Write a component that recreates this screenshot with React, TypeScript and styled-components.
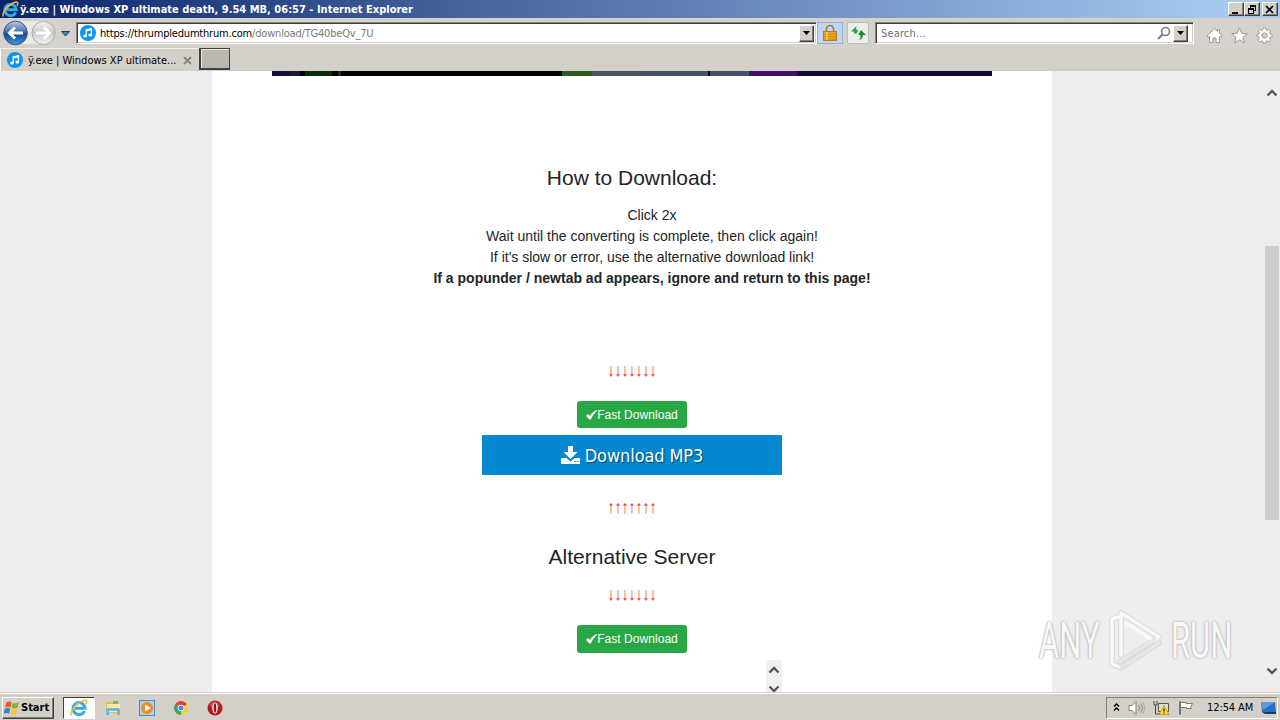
import styled, { createGlobalStyle } from "styled-components";

const uiFont = `Tahoma, "DejaVu Sans Condensed", "DejaVu Sans", sans-serif`;

const App = () => {
  return (
    <Desktop>
      <GlobalStyle />
      <TitleBar>
        <IeLogo size={17} />
        <TitleText>ÿ.exe | Windows XP ultimate death, 9.54 MB, 06:57 - Internet Explorer</TitleText>
        <WindowButtons>
          <WinButton>
            <svg width="10" height="9"><path d="M1 7h6v2H1z" /></svg>
          </WinButton>
          <WinButton>
            <svg width="10" height="9"><path d="M3 0h6v6H7V5h1V2H4v1H3zM1 3h6v6H1zM2 5v3h4V5z" fillRule="evenodd" /></svg>
          </WinButton>
          <WinButton $gap>
            <svg width="10" height="9"><path d="M1 1l7 7M8 1L1 8" stroke="#000" strokeWidth="1.7" /></svg>
          </WinButton>
        </WindowButtons>
      </TitleBar>

      <NavBar>
        <NavButtons />
        <AddressBox>
          <MusicIcon size={16} />
          <Url><i>https://</i><b>thrumpledumthrum.com</b>/download/TG40beQv_7U</Url>
          <DropButton><Triangle /></DropButton>
        </AddressBox>
        <SquareButton $blue>
          <svg width="16" height="18" viewBox="0 0 16 18">
            <path d="M4.500 8V5a3.500 3.500 0 0 1 7 0v3" fill="none" stroke="#a8842a" strokeWidth="1.700" />
            <rect x="1.500" y="7.500" width="13" height="9" fill="#e9a820" stroke="#b97c13" />
            <path d="M2 10h12M2 12.500h12M2 15h12" stroke="#c98a1b" />
            <path d="M5 8v8" stroke="#ffd977" strokeWidth="2" opacity=".6" />
          </svg>
        </SquareButton>
        <SquareButton>
          <svg width="16" height="16" viewBox="0 0 16 16">
            <path d="M6.500 1L1 6.500h3v2h3v-2h2L6 4z" fill="#2f9e3d" />
            <path d="M11 5l5 5h-3q0 4-4 5 2-2 1.500-5H8z" fill="#238431" />
          </svg>
        </SquareButton>
        <SearchBox>
          <span>Search...</span>
          <svg width="14" height="14" viewBox="0 0 14 14" fill="none" stroke="#858585">
            <circle cx="8.500" cy="5.500" r="4" strokeWidth="1.7" />
            <path d="M5.500 8.500L1 13" strokeWidth="2.300" />
          </svg>
          <DropButton><Triangle /></DropButton>
        </SearchBox>
        <Tools>
          <svg width="17" height="17" viewBox="0 0 17 17">
            <path d="M8.500 1.500L1 9l1.500 1L3.500 9.500V15.500H7V11h3v4.500h3.500V9.500l1 .5L16 9l-2.500-2.500V2.500h-2V4.500z" />
          </svg>
          <svg width="17" height="17" viewBox="0 0 17 17">
            <path d="M8.500 1l2.100 5.300 5.700.4-4.400 3.600 1.500 5.600-4.900-3.100-4.900 3.100 1.500-5.600L.7 6.700l5.700-.4z" />
          </svg>
          <svg width="17" height="17" viewBox="0 0 17 17">
            <path d="M7.200 1h2.600l.4 2 1.200.5 1.700-1.200 1.700 1.700-1.200 1.700.5 1.300 2 .4v2.400l-2 .4-.5 1.300 1.200 1.700-1.700 1.700-1.700-1.200-1.200.5-.4 2H7.200l-.4-2-1.200-.5-1.700 1.200-1.700-1.700 1.200-1.700-.5-1.300-2-.4V7.400l2-.4.5-1.300L2.200 4l1.700-1.700 1.700 1.200L6.800 3z" />
            <circle cx="8.500" cy="8.500" r="2.600" fill="#d6d1cb" />
          </svg>
        </Tools>
      </NavBar>

      <TabBar>
        <Tab>
          <MusicIcon size={16} />
          <span>ÿ.exe | Windows XP ultimate...</span>
          <svg width="9" height="9"><path d="M1 1l7 7M8 1L1 8" stroke="#8a8680" strokeWidth="2" /></svg>
        </Tab>
        <NewTab />
      </TabBar>

      <Viewport>
        <Page>
          <Banner />
          <Heading $top={87}>How to Download:</Heading>
          <Steps>
            <li>Click 2x</li>
            <li>Wait until the converting is complete, then click again!</li>
            <li>If it's slow or error, use the alternative download link!</li>
            <li><strong>If a popunder / newtab ad appears, ignore and return to this page!</strong></li>
          </Steps>
          <Arrows $top={71}>↓↓↓↓↓↓↓</Arrows>
          <FastButton $height={27}><Check />Fast Download</FastButton>
          <Mp3Button>
            <svg width="19" height="18" viewBox="0 0 19 18" fill="#fff">
              <path d="M7 0h5v6h4.500L9.500 13 2.500 6H7z" />
              <path d="M0 12h5.500l4 3.500 4-3.500H19v6H0z" />
              <path d="M13 15.500h1.500M16 15.500h1.500" stroke="#0288d1" />
            </svg>
            <span>Download MP3</span>
          </Mp3Button>
          <Arrows $top={22}>↑↑↑↑↑↑↑</Arrows>
          <Heading $top={24}>Alternative Server</Heading>
          <Arrows $top={12}>↓↓↓↓↓↓↓</Arrows>
          <FastButton $height={28}><Check />Fast Download</FastButton>
          <Frame>
            <FrameScroll>
              <Chevron up />
              <Chevron />
            </FrameScroll>
          </Frame>
        </Page>
        <ScrollBar>
          <Chevron up />
          <Thumb />
          <Chevron />
        </ScrollBar>
        <Watermark>
          <Mark $width={62}><span>ANY</span></Mark>
          <svg width="60" height="66" viewBox="0 0 60 66" fill="none" strokeLinejoin="round" strokeLinecap="round">
            <g stroke="#c9c9c9" strokeWidth="5.500" opacity=".6">
              <path d="M12 9L6 11v45l7 3M15 47V5l38 24-38 24M53 35L15 60v-5" />
            </g>
            <g stroke="#f8f8f8" strokeWidth="3.500">
              <path d="M12 9L6 11v45l7 3M15 47V5l38 24-5 4-28-18" />
            </g>
            <path d="M13 54L48 32l5 3-38 25v-3" stroke="#e6e6e6" strokeWidth="3.500" />
          </svg>
          <Mark $width={64}><span>RUN</span></Mark>
        </Watermark>
      </Viewport>

      <TaskBar>
        <StartButton>
          <svg width="16" height="16" viewBox="0 0 16 16">
            <path d="M2.500 2.500Q5 .8 7.800 2.300L6.500 7.500Q4 6.300 1 7.800z" fill="#ee5c26" />
            <path d="M8.800 2.700Q11.500 4 14.800 2.300L13.500 7.800Q10.500 9 7.500 7.800z" fill="#7db72f" />
            <path d="M.8 8.800Q3.500 7.300 6.300 8.500L5 13.500Q2.500 12.500-.4 14z" fill="#2c83d2" />
            <path d="M7.300 8.800Q10.300 10 13.300 8.800L12 14Q9 15.200 6 13.800z" fill="#fbc42c" />
          </svg>
          Start
        </StartButton>
        <TaskItem $active><IeLogo size={18} /></TaskItem>
        <TaskItem>
          <svg width="16" height="16" viewBox="0 0 16 16">
            <path d="M1 2h5l1 1h7v10H1z" fill="#e7bd55" />
            <path d="M2 4h13v8H2z" fill="#fbe8a2" />
            <path d="M8 1h5v3H8z" fill="#75b965" />
            <path d="M1 15V10q0-2 2-2h10q2 0 2 2v5h-3v-4H4v4z" fill="#6bb7dd" />
          </svg>
        </TaskItem>
        <TaskItem>
          <svg width="16" height="16" viewBox="0 0 16 16">
            <rect x=".5" y=".5" width="15" height="15" fill="#acd1ef" stroke="#4c8fc7" />
            <circle cx="8" cy="8" r="6" fill="#f28a1c" />
            <path d="M6 4.500v7L12 8z" fill="#fff" />
          </svg>
        </TaskItem>
        <TaskItem>
          <svg width="14" height="14" viewBox="0 0 14 14">
            <path d="M7 7L1 3.500A7 7 0 0 1 13 3.500z" fill="#df4534" />
            <path d="M7 7V14A7 7 0 0 1 1 3.500z" fill="#3ba55b" />
            <path d="M7 7l6-3.500A7 7 0 0 1 7 14z" fill="#f9ce3c" />
            <circle cx="7" cy="7" r="3.300" fill="#fff" />
            <circle cx="7" cy="7" r="2.500" fill="#4588e8" />
          </svg>
        </TaskItem>
        <TaskItem>
          <svg width="16" height="16" viewBox="0 0 16 16">
            <circle cx="8" cy="8" r="7.500" fill="#b51a1f" />
            <ellipse cx="7.500" cy="5" rx="5" ry="3.500" fill="#da6464" opacity=".6" />
            <ellipse cx="8" cy="8" rx="2.700" ry="5.500" fill="#fff" />
            <ellipse cx="8" cy="8" rx="1.300" ry="4.700" fill="#901318" />
          </svg>
        </TaskItem>
        <Tray>
          <svg width="7" height="9" fill="none" stroke="#000" strokeWidth="1.400"><path d="M1 3.500L3.500 1 6 3.500M1 7.500L3.500 5 6 7.500" /></svg>
          <svg width="17" height="16" viewBox="0 0 17 16" fill="none" stroke="#85827d">
            <path d="M1 5.500h3l4-4v13l-4-4H1z" fill="#fff" />
            <path d="M10.500 5q2 3 0 6M12.500 3.500q3.500 4.500 0 9" /><path d="M14.500 2q4 6 0 12" stroke="#aaa" />
          </svg>
          <svg width="17" height="16" viewBox="0 0 17 16">
            <path d="M5.500 3.500h10v8h-10z" fill="#ddd" stroke="#555" />
            <path d="M1 1v4h3V1M2.500 5v9h6" fill="none" stroke="#444" />
            <path d="M11 5.500l5 9H6z" fill="#ffdc22" stroke="#ba8e00" strokeWidth=".7" />
            <path d="M11 8.500v3M11 12.500v1" stroke="#222" strokeWidth="1.300" />
          </svg>
          <svg width="17" height="16" viewBox="0 0 17 16" fill="#fff" stroke="#77746f">
            <path d="M2.500 2.500h6v1h6l-2 4 1 1h-5v-1h-6z" />
            <path d="M1.500 1.500h1v13h-1z" />
          </svg>
          <Clock>12:54 AM</Clock>
          <svg width="15" height="14" viewBox="0 0 15 14">
            <path d="M0 1h14l1 10H1z" fill="#2870bd" />
            <path d="M0 1h14L2 9z" fill="#5a9bdd" />
            <path d="M1 11h14v2H4z" fill="#183d6d" />
          </svg>
        </Tray>
      </TaskBar>
    </Desktop>
  );
};

const IeLogo = ({ size }: { size: number }) => (
  <svg width={size} height={size} viewBox="0 0 18 18" fill="none">
    <path d="M14.500 12A6 6 0 1 1 15 9.300H5" stroke="#36a9e8" strokeWidth="3" />
    <path d="M4 8.500q1-4 5-4.300" stroke="#9ce1fa" strokeWidth="1" />
    <path d="M1.500 16.500Q-.5 14 5 7.800 12 .3 16 1.300q1.500.5 0 4" stroke="#efbd31" strokeWidth="1.600" />
  </svg>
);

const MusicIcon = ({ size }: { size: number }) => (
  <svg width={size} height={size} viewBox="0 0 16 16">
    <circle cx="8" cy="8" r="8" fill="#0b94f4" />
    <path d="M6.200 11V4.700l5.300-1v6.300" fill="none" stroke="#fff" strokeWidth="1.300" />
    <path d="M6.200 5.500l5.300-1" stroke="#fff" strokeWidth="1.800" />
    <ellipse cx="5" cy="11" rx="1.900" ry="1.600" fill="#fff" />
    <ellipse cx="10.300" cy="10" rx="1.900" ry="1.600" fill="#fff" />
  </svg>
);

const NavButtons = () => (
  <svg width="75" height="30" viewBox="0 0 75 30">
    <defs>
      <linearGradient id="back" x2="0" y2="1">
        <stop stopColor="#b7c9e6" />
        <stop offset=".45" stopColor="#416fb1" />
        <stop offset=".55" stopColor="#154a94" />
        <stop offset="1" stopColor="#3a9be0" />
      </linearGradient>
      <linearGradient id="forward" x2="0" y2="1">
        <stop stopColor="#f6f6f6" />
        <stop offset=".5" stopColor="#c8cacb" />
        <stop offset="1" stopColor="#f2f5f7" />
      </linearGradient>
    </defs>
    <path d="M15 3h29v23H15z" fill="#ece9e5" />
    <circle cx="15.500" cy="15" r="11.800" fill="url(#back)" stroke="#375785" />
    <circle cx="43.500" cy="15" r="11.500" fill="url(#forward)" stroke="#a8abad" />
    <path d="M23 15H10M15 9.500L9.500 15l5.500 5.500" fill="none" stroke="#fff" strokeWidth="3" />
    <path d="M36 15h13M44 9.500l5.500 5.500-5.500 5.500" fill="none" stroke="#fff" strokeWidth="3" />
    <path d="M61.500 13.500h8L65.500 18z" fill="#3189bd" stroke="#203d5d" />
  </svg>
);

const Triangle = () => (
  <svg width="7" height="4"><path d="M0 0h7L3.500 4z" /></svg>
);

const Check = () => (
  <svg width="11" height="10" viewBox="0 0 11 10"><path d="M0 5.500l2.200-1.500 1.500 2Q6.500 2 10.200 0l.8.800Q7.500 4 4.700 9.500H3z" fill="#fff" /></svg>
);

const Chevron = ({ up }: { up?: boolean }) => (
  <svg width="12" height="8" viewBox="0 0 12 8" fill="none" stroke="#555" strokeWidth="2.300">
    <path d={up ? "M1.500 6.500L6 2l4.500 4.500" : "M1.500 1.500L6 6l4.500-4.500"} />
  </svg>
);

const GlobalStyle = createGlobalStyle`
  * {
    box-sizing: border-box;
  }

  body {
    margin: 0;
    overflow: hidden;
  }

  svg {
    display: block;
    flex-shrink: 0;
  }
`;

const Desktop = styled.div`
  display: flex;
  flex-direction: column;
  width: 1280px;
  height: 720px;
  overflow: hidden;
  background: #d4d0c8;
  font: 11px ${uiFont};
  color: #000;
  white-space: nowrap;
`;

const TitleBar = styled.header`
  display: flex;
  align-items: center;
  height: 18px;
  padding: 0 2px;
  background: linear-gradient(90deg, #0a246a, #a6caf0 96%);
`;

const TitleText = styled.h1`
  flex: 1;
  margin: 0 0 0 1px;
  color: #fff;
  font-size: 11px;
  font-weight: bold;
  letter-spacing: 0.01px;
`;

const WindowButtons = styled.div`
  display: flex;
`;

const bevel = `
  background: #d4d0c8;
  border: 1px solid;
  border-color: #fff #404040 #404040 #fff;
  box-shadow: inset -1px -1px #808080;
`;

const WinButton = styled.div<{ $gap?: boolean }>`
  display: flex;
  justify-content: center;
  align-items: center;
  width: 16px;
  height: 14px;
  margin-left: ${({ $gap }) => ($gap ? "2px" : "0")};
  ${bevel}
`;

const NavBar = styled.nav`
  display: flex;
  align-items: center;
  height: 30px;
  background: #d6d1cb;
`;

const sunken = `
  background: #fff;
  border: 1px solid;
  border-color: #808080 #fff #fff #808080;
  box-shadow: inset 1px 1px #404040, inset -1px -1px #d4d0c8;
`;

const AddressBox = styled.div`
  display: flex;
  align-items: center;
  width: 741px;
  height: 22px;
  margin-left: 1px;
  padding: 0 2px 0 3px;
  ${sunken}
`;

const Url = styled.span`
  flex: 1;
  margin-left: 4px;
  color: #777;
  letter-spacing: -0.19px;

  b, i {
    color: #000;
    font-weight: normal;
    font-style: normal;
  }
`;

const DropButton = styled.div`
  display: flex;
  justify-content: center;
  align-items: center;
  width: 15px;
  height: 17px;
  ${bevel}
`;

const SquareButton = styled.div<{ $blue?: boolean }>`
  display: flex;
  justify-content: center;
  align-items: center;
  width: ${({ $blue }) => ($blue ? 26 : 22)}px;
  height: 22px;
  margin-left: ${({ $blue }) => ($blue ? 0 : 4)}px;
  border: 1px solid ${({ $blue }) => ($blue ? "#8fb1dc" : "#bcbcb9")};
  border-radius: ${({ $blue }) => ($blue ? 0 : 2)}px;
  background: ${({ $blue }) => ($blue ? "#bed7f5" : "#eceeeb")};
`;

const SearchBox = styled.div`
  display: flex;
  align-items: center;
  width: 319px;
  height: 22px;
  margin-left: 6px;
  padding: 0 5px;
  ${sunken}

  span {
    flex: 1;
    color: #6d6d6d;
    letter-spacing: 0.15px;
  }

  svg {
    margin-right: 2px;
  }

  svg + div svg {
    margin: 0;
  }
`;

const Tools = styled.div`
  display: flex;
  gap: 8px;
  margin: 4px 0 0 12px;

  svg {
    fill: #fff;
    stroke: #96928d;
    stroke-width: 0.9;
  }
`;

const TabBar = styled.div`
  display: flex;
  height: 23px;
  background: #d4cfc8;
`;

const Tab = styled.div`
  display: flex;
  align-items: center;
  width: 199px;
  padding: 0 7px 0 6px;
  border-top: 1px solid #f3f0ec;
  border-left: 1px solid #fff;

  span {
    flex: 1;
    margin-left: 5px;
    letter-spacing: 0;
  }
`;

const NewTab = styled.div`
  width: 31px;
  height: 22px;
  background: #bcb7b1;
  border: 1px solid #404040;
  border-width: 1px 1px 2px 2px;
  box-shadow: inset 1px 1px #ece8e3;
`;

const Viewport = styled.main`
  position: relative;
  display: flex;
  justify-content: space-between;
  height: 621px;
  padding-left: 212px;
  overflow: hidden;
  background: #eee;
`;

const Page = styled.div`
  display: flex;
  flex-direction: column;
  align-items: center;
  width: 840px;
  background: #fff;
  color: #212529;
  font-family: Arial, "Liberation Sans", sans-serif;
`;

const Banner = styled.div`
  flex-shrink: 0;
  width: 720px;
  height: 5px;
  background: linear-gradient(
    90deg,
    #170e3c 0 18px, #151b39 18px 28px, #000 28px 33px, #052f0c 33px 60px,
    #000 60px 66px, #28282c 66px 69px, #000 69px 290px, #2e5923 290px 320px,
    #4d5265 320px 370px, #40516a 370px 436px, #05060b 436px 438px, #43536b 438px 477px,
    #420e6e 477px 525px, #14083b 525px
  );
`;

const Heading = styled.h2<{ $top: number }>`
  flex-shrink: 0;
  margin: ${({ $top }) => $top}px 0 0;
  font-size: 21px;
  line-height: 30px;
  font-weight: normal;
`;

const Steps = styled.ul`
  flex-shrink: 0;
  width: 720px;
  margin: 12px 0 0;
  padding: 0 0 0 40px;
  list-style: none;
  font-size: 14px;
  line-height: 21px;
  text-align: center;
`;

const Arrows = styled.p<{ $top: number }>`
  flex-shrink: 0;
  margin: ${({ $top }) => $top}px 0 0;
  height: 21px;
  color: #f5142d;
  font: 14px/21px "Liberation Sans", sans-serif;
  transform: scaleY(1.3);
`;

const FastButton = styled.button<{ $height: number }>`
  display: flex;
  flex-shrink: 0;
  justify-content: center;
  align-items: center;
  width: 110px;
  height: ${({ $height }) => $height}px;
  margin: 20px 0 0;
  padding: 0;
  border: 0;
  border-radius: 3px;
  background: #28a745;
  color: #fff;
  font: 12px Arial, "Liberation Sans", sans-serif;
  letter-spacing: 0.05px;
`;

const Mp3Button = styled.button`
  display: flex;
  flex-shrink: 0;
  justify-content: center;
  align-items: center;
  gap: 5px;
  width: 300px;
  height: 40px;
  margin: 7px 0 0;
  padding: 0;
  border: 0;
  border-radius: 1px;
  background: #0288d1;
  color: #fff;
  font: 18px ${uiFont};
  letter-spacing: -0.1px;
  text-shadow: 1px 1px 1px #00456e;
`;

const Frame = styled.div`
  display: flex;
  justify-content: flex-end;
  flex-shrink: 0;
  width: 300px;
  height: 32px;
  margin-top: 7px;
`;

const FrameScroll = styled.div`
  display: flex;
  flex-direction: column;
  align-items: center;
  gap: 11px;
  width: 16px;
  padding-top: 6px;
  background: #f0f0f0;
  overflow: hidden;
`;

const ScrollBar = styled.div`
  display: flex;
  flex-direction: column;
  align-items: center;
  width: 16px;
  padding: 18px 0 17px;
  background: #eee;

  svg:last-child {
    margin-top: auto;
  }
`;

const Thumb = styled.div`
  width: 14px;
  height: 274px;
  margin-top: 149px;
  background: #cdcdcd;
`;

const Watermark = styled.div`
  position: absolute;
  top: 537px;
  left: 1039px;
  display: flex;
  align-items: center;
  gap: 5px;
`;

const Mark = styled.div<{ $width: number }>`
  width: ${({ $width }) => $width}px;

  span {
    display: inline-block;
    font: 50px/60px Roboto, sans-serif;
    color: #f8f8f8;
    transform: scaleX(0.62);
    transform-origin: left;
    text-shadow: 0 0 3px #a5a5a5, 0 0 2px #bbb;
  }
`;

const TaskBar = styled.footer`
  display: flex;
  align-items: center;
  height: 28px;
  padding: 2px 2px 0 2px;
  border-top: 1px solid #d4d0c8;
  box-shadow: inset 0 1px #fff;
`;

const StartButton = styled.button`
  display: flex;
  align-items: center;
  gap: 1px;
  width: 52px;
  height: 22px;
  margin-right: 9px;
  padding: 0 0 0 1px;
  color: #000;
  font: bold 11px ${uiFont};
  ${bevel}
`;

const TaskItem = styled.div<{ $active?: boolean }>`
  display: flex;
  justify-content: center;
  align-items: center;
  width: 32px;
  height: 22px;
  margin-right: 2px;
  ${({ $active }) => $active && `
    background: #fff;
    border: 1px solid;
    border-color: #404040 #fff #fff #404040;
  `}
`;

const Tray = styled.div`
  display: flex;
  align-items: center;
  gap: 8px;
  width: 172px;
  height: 22px;
  margin-left: auto;
  padding: 0 2px 0 6px;
  border: 1px solid;
  border-color: #808080 #fff #fff #808080;
`;

const Clock = styled.time`
  width: 48px;
  margin-left: 4px;
  letter-spacing: -0.1px;
`;

export default App;
